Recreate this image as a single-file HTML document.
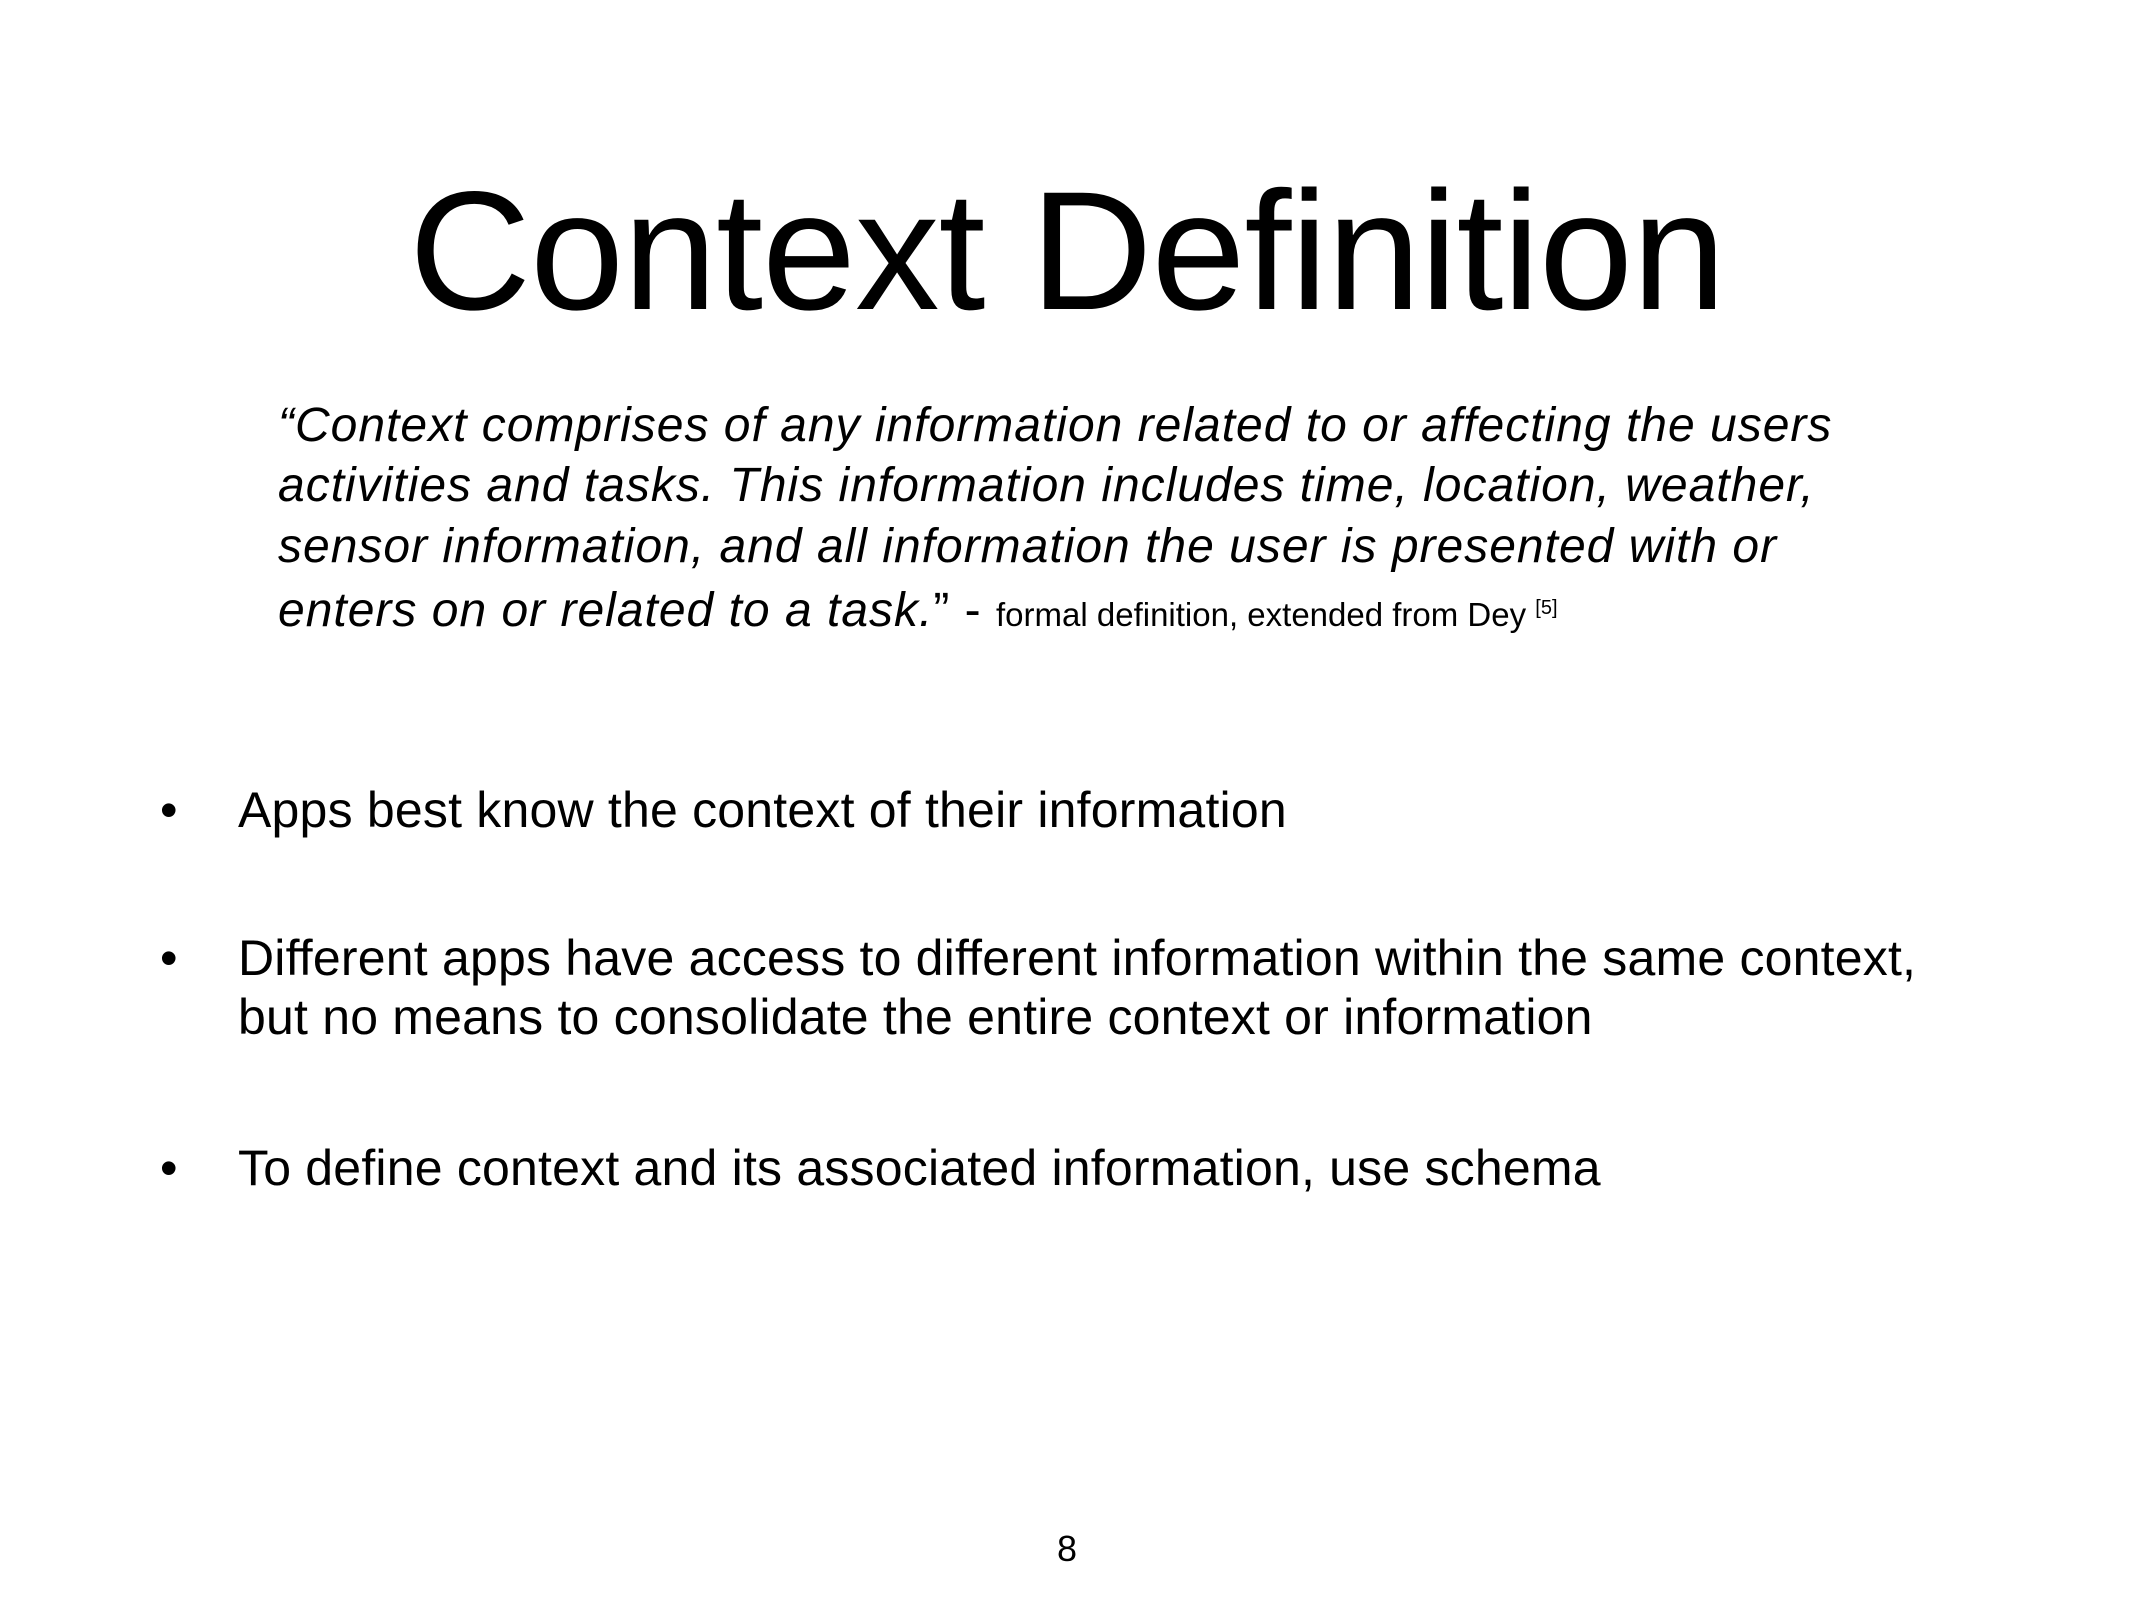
<!DOCTYPE html>
<html><head><meta charset="utf-8"><style>
html,body{margin:0;padding:0;background:#fff;}
body{width:2134px;height:1600px;position:relative;overflow:hidden;font-family:"Liberation Sans",Arial,sans-serif;color:#000;}
.a{position:absolute;line-height:1;white-space:nowrap;}
.t{font-size:169px;left:0;width:2134px;text-align:center;top:166px;font-weight:normal;letter-spacing:-1px;}
.q{font-size:48px;font-style:italic;left:278px;letter-spacing:1px;}
.b{font-size:50px;left:238px;letter-spacing:0.2px;}
.d{font-size:50px;left:160px;}
.s{font-size:33px;font-style:normal;letter-spacing:0;}
</style></head><body>
<div class="a t">Context Definition</div>
<div class="a q" style="top:402px">“Context comprises of any information related to or affecting the users</div>
<div class="a q" style="top:462px">activities and tasks. This information includes time, location, weather,</div>
<div class="a q" style="top:523px">sensor information, and all information the user is presented with or</div>
<div class="a q" style="top:587px">enters on or related to a task.<span style="font-style:normal">” -</span> <span class="s">formal definition, extended from Dey <sup style="font-size:20px">[5]</sup></span></div>
<div class="a d" style="top:785px">•</div>
<div class="a b" style="top:785px">Apps best know the context of their information</div>
<div class="a d" style="top:933px">•</div>
<div class="a b" style="top:933px">Different apps have access to different information within the same context,</div>
<div class="a b" style="top:992px">but no means to consolidate the entire context or information</div>
<div class="a d" style="top:1143px">•</div>
<div class="a b" style="top:1143px">To define context and its associated information, use schema</div>
<div class="a" style="font-size:36px;left:0;width:2134px;text-align:center;top:1531px">8</div>
</body></html>
